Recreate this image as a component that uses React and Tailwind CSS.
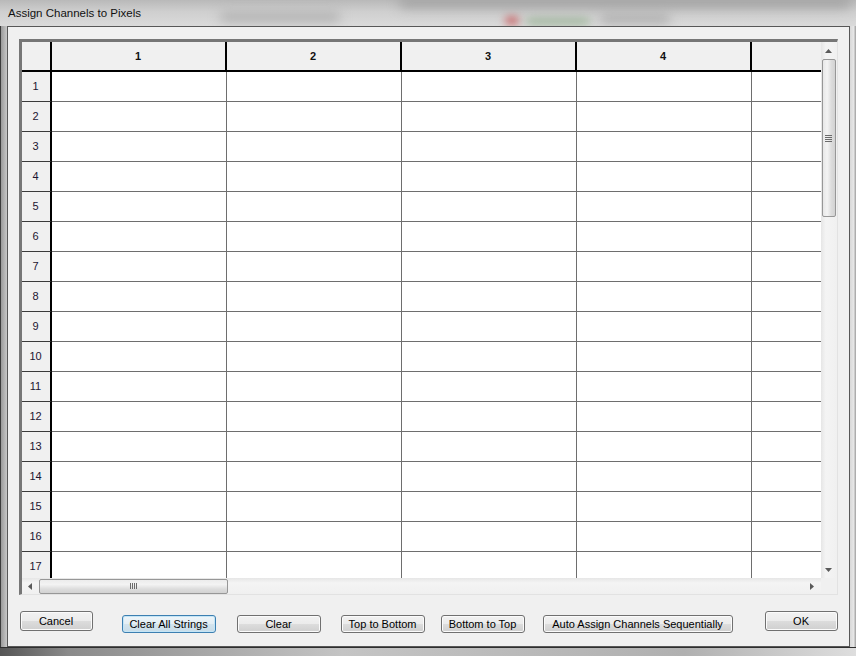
import React from 'react';

const COLS = [1, 2, 3, 4, 5];
const ROWS = Array.from({ length: 17 }, (_, i) => i + 1);

const btnBase =
    'h-[18px] rounded-[3px] border text-[11px] leading-none text-black flex items-center justify-center shrink-0';
const btnNormal =
    'border-[#707070] bg-[linear-gradient(to_bottom,#f2f2f2_0%,#ebebeb_50%,#dddddd_50%,#cfcfcf_100%)] shadow-[inset_0_0_0_1px_#fbfbfb]';
const btnFocus =
    'border-[#3c7fb1] bg-[linear-gradient(to_bottom,#eef5f9_0%,#e3eef4_50%,#d3e4ee_50%,#c7dce8_100%)] shadow-[inset_0_0_0_1px_#c4e5f6]';

const Arrow = ({ dir }) => {
    const pts = {
        up: '0,4 3.5,0 7,4',
        down: '0,0 3.5,4 7,0',
        left: '4,0 0,3.5 4,7',
        right: '0,0 4,3.5 0,7',
    }[dir];
    const vert = dir === 'up' || dir === 'down';
    return (
        <svg width={vert ? 7 : 4} height={vert ? 4 : 7} viewBox={vert ? '0 0 7 4' : '0 0 4 7'}>
            <polygon points={pts} fill="#5a5a5a" />
        </svg>
    );
};

const VScrollbar = () => (
    <div className="w-[16px] h-[536px] flex flex-col bg-[linear-gradient(to_right,#e6e6e6,#f4f4f4_30%,#f0f0f0)]">
        <div className="h-[17px] flex items-center justify-center pt-[1px]">
            <Arrow dir="up" />
        </div>
        <div className="h-[158px] mx-[1px] rounded-[2px] border border-[#979797] bg-[linear-gradient(to_right,#e7e7e7,#f3f3f3_35%,#dcdcdc_70%,#d2d2d2)] flex items-center justify-center">
            <div className="flex flex-col gap-[1px]">
                {[0, 1, 2, 3].map((i) => (
                    <div key={i} className="w-[7px] h-[1px] bg-[#6a6a6a]" />
                ))}
            </div>
        </div>
        <div className="flex-1" />
        <div className="h-[17px] flex items-center justify-center">
            <Arrow dir="down" />
        </div>
    </div>
);

const HScrollbar = () => (
    <div className="h-[16px] w-[800px] flex items-center bg-[linear-gradient(to_bottom,#e6e6e6,#f4f4f4_30%,#f0f0f0)]">
        <div className="w-[17px] flex items-center justify-center">
            <Arrow dir="left" />
        </div>
        <div className="w-[189px] h-[15px] rounded-[2px] border border-[#979797] bg-[linear-gradient(to_bottom,#ececec,#f3f3f3_35%,#dcdcdc_70%,#d2d2d2)] flex items-center justify-center">
            <div className="flex gap-[1px]">
                {[0, 1, 2, 3].map((i) => (
                    <div key={i} className="w-[1px] h-[6px] bg-[#6a6a6a]" />
                ))}
            </div>
        </div>
        <div className="flex-1" />
        <div className="w-[17px] flex items-center justify-center">
            <Arrow dir="right" />
        </div>
    </div>
);

const Grid = () => (
    <div className="w-[819px] h-[556px] border-t-[3px] border-l-[3px] border-r border-b border-t-[#767676] border-l-[#767676] border-r-[#e2e2e2] border-b-[#e2e2e2] flex flex-col">
        <div className="flex">
            <div className="w-[800px] h-[536px] overflow-hidden bg-white">
                <div className="flex h-[30px] w-max">
                    <div className="w-[30px] shrink-0 bg-[#f0f0f0] border-r-2 border-b-2 border-black" />
                    {COLS.map((c) => (
                        <div
                            key={c}
                            className="w-[175px] shrink-0 bg-[#f0f0f0] border-r-2 border-b-2 border-black flex items-center justify-center text-[11px] font-bold text-[#111]"
                        >
                            {c < 5 ? c : ''}
                        </div>
                    ))}
                </div>
                {ROWS.map((r) => (
                    <div key={r} className="flex h-[30px] w-max">
                        <div className="w-[30px] shrink-0 bg-[#f0f0f0] border-r-2 border-r-black border-b border-b-[#3a3a3a] flex items-center justify-center text-[11px] text-[#1c1430]">
                            {r}
                        </div>
                        {COLS.map((c) => (
                            <div
                                key={c}
                                className="w-[175px] shrink-0 bg-white border-r border-b border-[#6e6e6e]"
                            />
                        ))}
                    </div>
                ))}
            </div>
            <VScrollbar />
        </div>
        <div className="flex">
            <HScrollbar />
            <div className="w-[16px] h-[16px] bg-[#f0f0f0]" />
        </div>
    </div>
);

export default function App() {
    return (
        <div className="w-[856px] h-[656px] flex flex-col overflow-hidden font-['Liberation_Sans',Arial,sans-serif] bg-[#c6c6c6]">
            <div className="relative h-[26px] bg-[linear-gradient(to_bottom,#b9b9b9,#cfcfcf_45%,#dadada)] flex items-center px-2 overflow-hidden">
                <div className="absolute left-[220px] top-[13px] w-[120px] h-[8px] rounded-full bg-[#a8a8a8] blur-[6px]" />
                <div className="absolute left-[505px] top-[16px] w-[14px] h-[9px] rounded-full bg-[#c9686a] blur-[4px]" />
                <div className="absolute left-[526px] top-[18px] w-[64px] h-[7px] rounded-full bg-[#99b395] blur-[5px]" />
                <div className="absolute left-[600px] top-[15px] w-[70px] h-[8px] rounded-full bg-[#a6a6a6] blur-[6px]" />
                <div className="absolute left-[400px] top-[-6px] w-[450px] h-[14px] bg-[#a5a5a5] blur-[6px]" />
                <span className="relative text-[11.5px] text-[#111] pt-[2px]">Assign Channels to Pixels</span>
            </div>
            <div className="flex h-[621px]">
                <div className="w-[7px] border-l border-[#3c3c3c] bg-[linear-gradient(to_right,#9a9a9a,#c8c8c8)]" />
                <div className="flex-1 border border-[#575757] bg-[#f0f0f0] pt-[12px] px-[11px] flex flex-col">
                    <Grid />
                    <div className="flex items-start mt-[16px]">
                        <button className={`${btnBase} ${btnNormal} ml-[1px] w-[73px] h-[20px]`}>Cancel</button>
                        <button className={`${btnBase} ${btnFocus} ml-[29px] mt-[4px] w-[94px]`}>Clear All Strings</button>
                        <button className={`${btnBase} ${btnNormal} ml-[21px] mt-[4px] w-[84px]`}>Clear</button>
                        <button className={`${btnBase} ${btnNormal} ml-[20px] mt-[4px] w-[84px]`}>Top to Bottom</button>
                        <button className={`${btnBase} ${btnNormal} ml-[16px] mt-[4px] w-[84px]`}>Bottom to Top</button>
                        <button className={`${btnBase} ${btnNormal} ml-[18px] mt-[4px] w-[190px]`}>Auto Assign Channels Sequentially</button>
                        <button className={`${btnBase} ${btnNormal} ml-[32px] w-[73px] h-[20px]`}>OK</button>
                    </div>
                </div>
                <div className="w-[7px] bg-[linear-gradient(to_right,#d8d8d8,#e6e6e6_60%,#9e9e9e)]" />
            </div>
            <div className="h-[9px] border-t border-[#2e2e2e] bg-[linear-gradient(to_right,#555,#8a8a8a_8%,#c4c4c4_40%,#b0b0b0_80%,#dedede)]" />
        </div>
    );
}
